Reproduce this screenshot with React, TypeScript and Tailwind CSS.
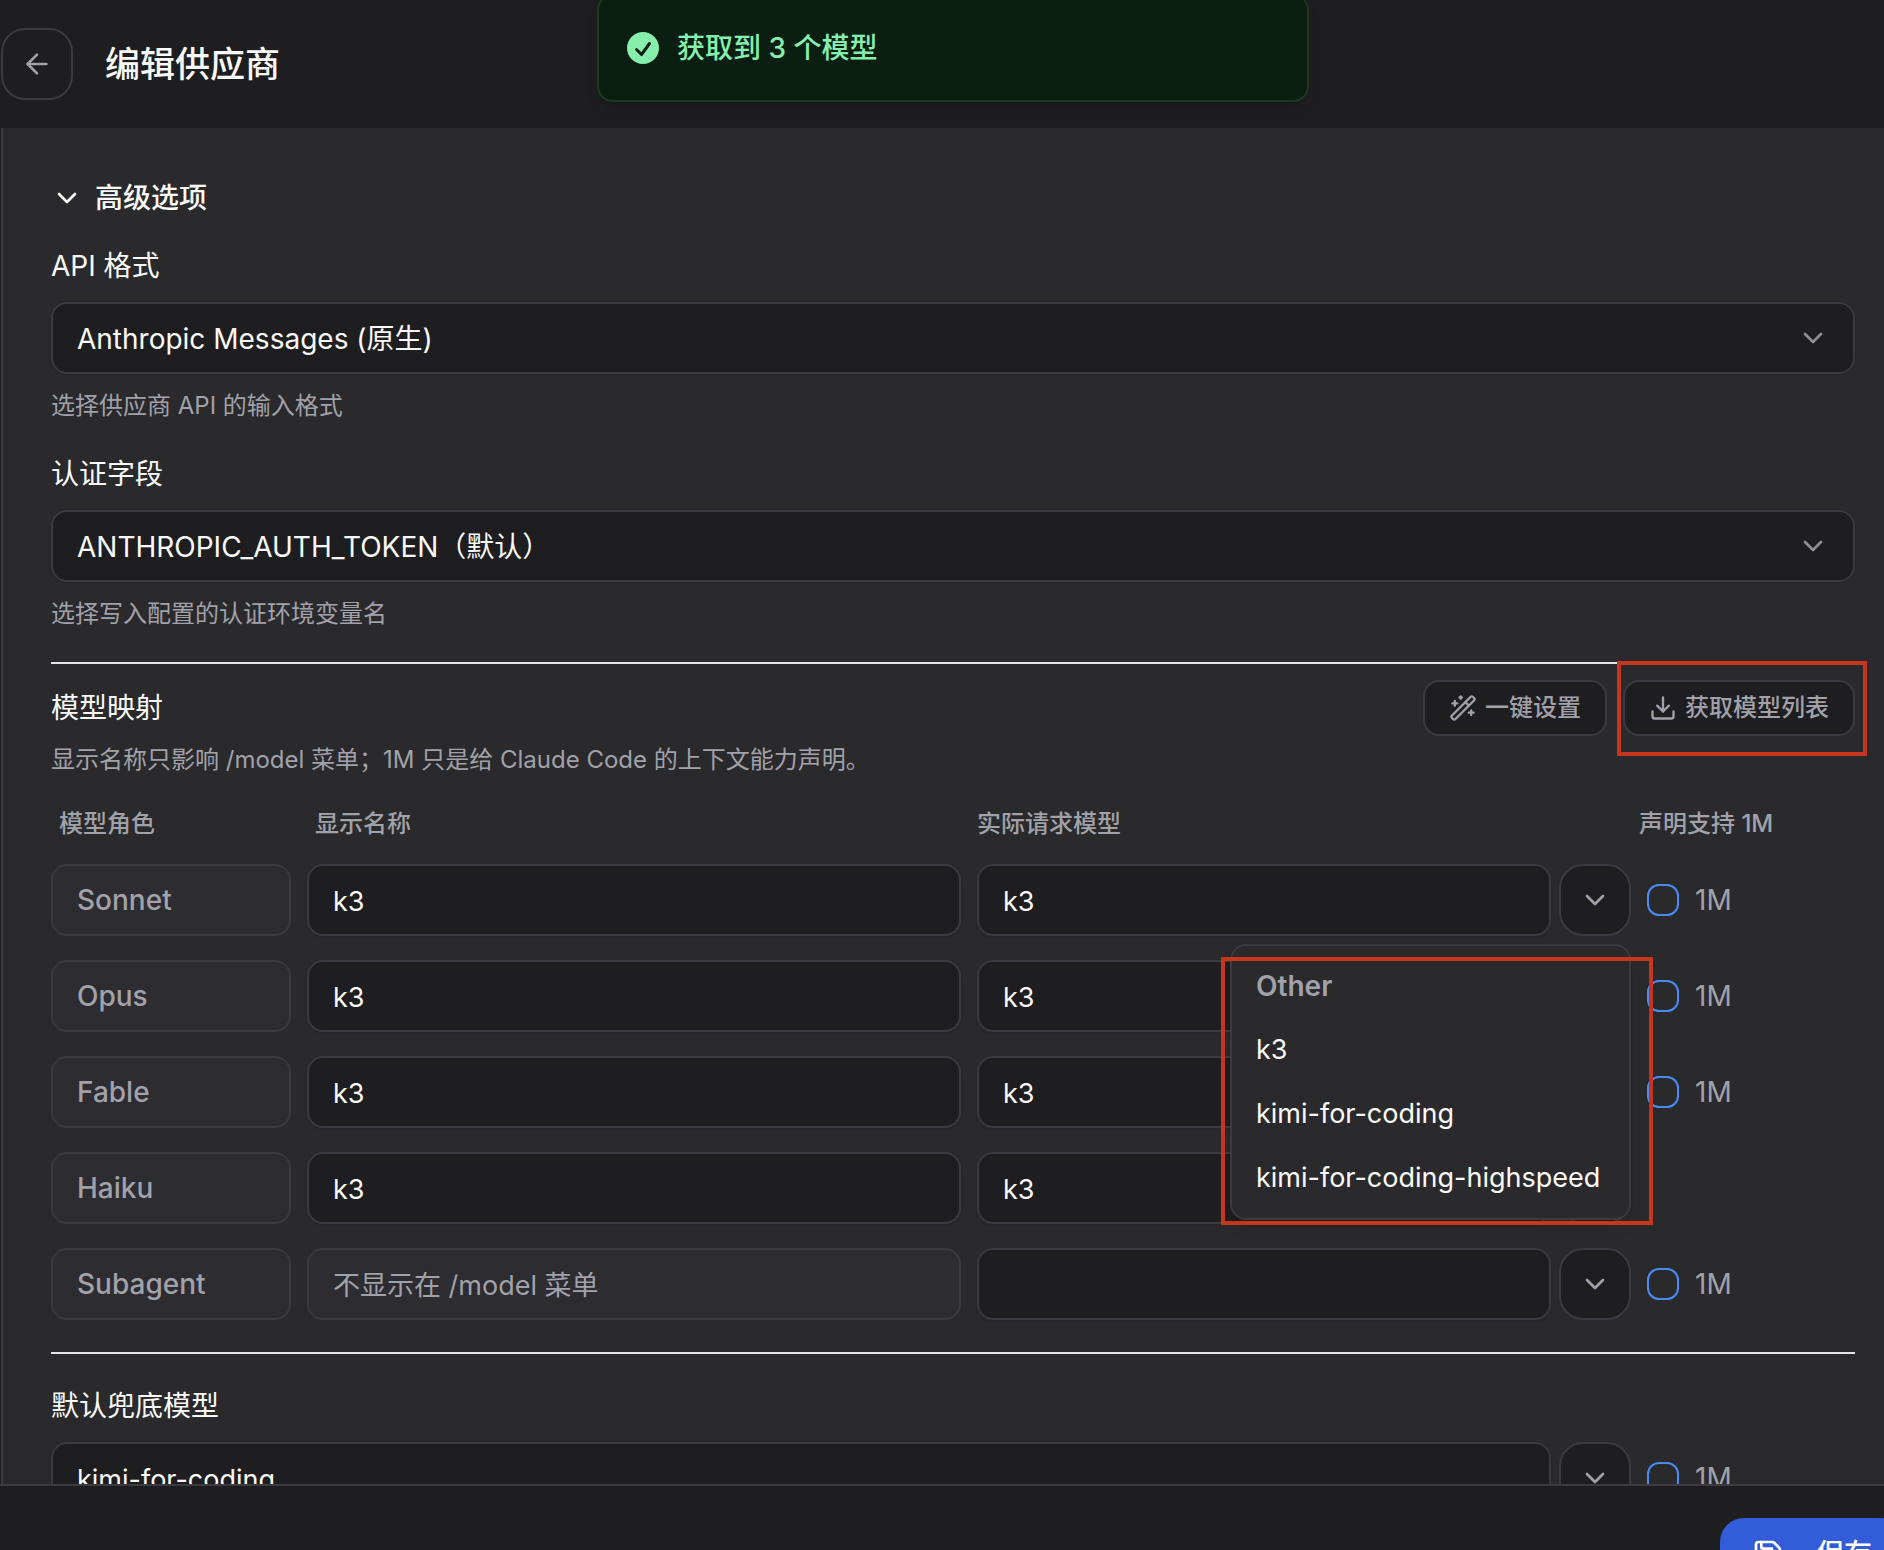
import React, { useState } from "react";
import { ArrowLeft, ChevronDown, Download, Save, WandSparkles } from "lucide-react";

type ModelRole = {
  id: string;
  role: string;
  display: string | null;
  model: string;
  canDeclare1M: boolean;
};

const ROLES: ModelRole[] = [
  { id: "sonnet", role: "Sonnet", display: "k3", model: "k3", canDeclare1M: true },
  { id: "opus", role: "Opus", display: "k3", model: "k3", canDeclare1M: true },
  { id: "fable", role: "Fable", display: "k3", model: "k3", canDeclare1M: true },
  { id: "haiku", role: "Haiku", display: "k3", model: "k3", canDeclare1M: false },
  { id: "subagent", role: "Subagent", display: null, model: "", canDeclare1M: true },
];

const FETCHED_MODELS = ["k3", "kimi-for-coding", "kimi-for-coding-highspeed"];

const fieldClass = "h-18 w-full min-w-0 rounded-2xl border-2 border-[#3a3a40] px-6 pt-0.5 outline-none";
const inputClass = `${fieldClass} bg-[#1e1e20] text-[27px] text-[#fafafa] shadow-sm`;

function SelectField({ id, label, hint, options }: { id: string; label: string; hint: string; options: string[] }) {
  return (
    <div className="flex flex-col gap-4">
      <label htmlFor={id} className="text-[28px] leading-10">{label}</label>
      <div className="relative">
        <select id={id} className={`${fieldClass} block appearance-none bg-[#1e1e20] text-[28px] text-[#fafafa] shadow-sm`}>
          {options.map((o) => (
            <option key={o}>{o}</option>
          ))}
        </select>
        <ChevronDown className="pointer-events-none absolute right-[26px] top-5 size-8 text-[#8f8f92]" />
      </div>
      <p className="text-2xl text-[#a1a1aa]">{hint}</p>
    </div>
  );
}

function ModelMenu({ onPick }: { onPick: (model: string) => void }) {
  return (
    <div className="absolute right-0 top-20 z-10 min-w-[401px]">
      <div role="menu" className="rounded-2xl border-2 border-[#3a3a40] bg-[#2a2a2c] p-2 shadow-lg">
        <div className="flex h-16 items-center px-4 text-[28px] font-semibold text-[#a1a1aa]">Other</div>
        {FETCHED_MODELS.map((m) => (
          <button
            key={m}
            type="button"
            role="menuitem"
            onClick={() => onPick(m)}
            className="flex h-16 w-full items-center whitespace-nowrap px-4 text-[27px] text-[#fafafa]"
          >
            {m}
          </button>
        ))}
      </div>
      <div className="pointer-events-none absolute -bottom-[5px] -left-[9px] -right-[22px] top-[13px] border-4 border-[#c6361f]" />
    </div>
  );
}

function ModelPicker({ id, label, initial, defaultOpen = false }: { id: string; label: string; initial: string; defaultOpen?: boolean }) {
  const [value, setValue] = useState(initial);
  const [open, setOpen] = useState(defaultOpen);

  return (
    <div className="relative flex min-w-0 flex-1 gap-2">
      <input id={id} aria-label={label} value={value} onChange={(e) => setValue(e.target.value)} className={inputClass} />
      <button
        type="button"
        aria-label="选择模型"
        onClick={() => setOpen(!open)}
        className="flex size-18 shrink-0 items-center justify-center rounded-3xl border-2 border-[#3a3a40] bg-[#1e1e20] text-[#a1a1aa]"
      >
        <ChevronDown className="size-8" />
      </button>
      {open && (
        <ModelMenu
          onPick={(m) => {
            setValue(m);
            setOpen(false);
          }}
        />
      )}
    </div>
  );
}

function Declare1M() {
  return (
    <label className="flex h-18 items-center gap-4 text-[28px] text-[#a1a1aa]">
      <input
        type="checkbox"
        className="size-8 appearance-none rounded-xl border-2 border-[#4a8af4] checked:bg-[#4a8af4]"
      />
      1M
    </label>
  );
}

export default function App() {
  const [expanded, setExpanded] = useState(true);

  return (
    <div className="flex h-screen flex-col overflow-hidden bg-[#1e1e20] font-[Inter,'Noto_Sans_CJK_SC',sans-serif] text-[#fafafa]">
      {/* Toast */}
      <div
        role="status"
        className="absolute -top-1.5 left-1/2 z-20 ml-[11px] flex h-[108px] w-[712px] -translate-x-1/2 items-center gap-3.5 rounded-2xl border-2 border-[#1b3a20] bg-[#0a1e12] px-6 text-[28px] font-medium text-[#86efac] shadow-lg"
      >
        <svg viewBox="0 0 20 20" fill="currentColor" className="size-10">
          <path
            fillRule="evenodd"
            clipRule="evenodd"
            d="M10 18a8 8 0 100-16 8 8 0 000 16zm3.857-9.809a.75.75 0 00-1.214-.882l-3.483 4.79-1.88-1.88a.75.75 0 10-1.06 1.061l2.5 2.5a.75.75 0 001.137-.089l4-5.5z"
          />
        </svg>
        获取到 3 个模型
      </div>

      {/* Header */}
      <header className="flex h-32 shrink-0 items-center gap-8 pl-px">
        <button
          type="button"
          aria-label="返回"
          className="flex size-18 items-center justify-center rounded-3xl border-2 border-[#3a3a40] text-[#a1a1aa]"
        >
          <ArrowLeft className="size-8" />
        </button>
        <h1 className="text-[35px] font-medium">编辑供应商</h1>
      </header>

      {/* Form */}
      <main className="ml-px min-h-0 flex-1 overflow-hidden border-l-2 border-[#3e3e42] bg-[#2a2a2c] pl-12 pr-[29px] pt-[50px]">
        <button
          type="button"
          onClick={() => setExpanded(!expanded)}
          className="mb-7 flex h-10 items-center gap-3 text-[28px] font-medium"
        >
          <ChevronDown className="size-8" />
          高级选项
        </button>

        {expanded && (
          <>
            <div className="flex flex-col gap-8">
              <SelectField
                id="api-format"
                label="API 格式"
                hint="选择供应商 API 的输入格式"
                options={["Anthropic Messages (原生)"]}
              />
              <SelectField
                id="auth-field"
                label="认证字段"
                hint="选择写入配置的认证环境变量名"
                options={["ANTHROPIC_AUTH_TOKEN（默认）"]}
              />
            </div>

            {/* Model mapping */}
            <section className="mt-8 border-t-2 border-[#e5e5e5] pt-4">
              <div className="flex items-center gap-4">
                <h2 className="flex-1 text-[28px]">模型映射</h2>
                <button
                  type="button"
                  className="flex h-14 items-center gap-2 rounded-2xl border-2 border-[#3a3a40] bg-[#1e1e20] px-6 text-2xl font-medium text-[#a1a1aa]"
                >
                  <WandSparkles className="size-7" />
                  一键设置
                </button>
                <div className="relative">
                  <button
                    type="button"
                    className="flex h-14 items-center gap-2 rounded-2xl border-2 border-[#3a3a40] bg-[#1e1e20] px-6 text-2xl font-medium text-[#a1a1aa]"
                  >
                    <Download className="size-7" />
                    获取模型列表
                  </button>
                  <div className="pointer-events-none absolute -bottom-5 -left-1.5 -right-3 -top-[19px] border-4 border-[#c6361f]" />
                </div>
              </div>
              <p className="mt-2 text-2xl text-[#a1a1aa]">
                显示名称只影响 /model 菜单；1M 只是给 Claude Code 的上下文能力声明。
              </p>

              <table className="mt-8 block">
                <thead className="block">
                  <tr className="grid grid-cols-[240px_1fr_1fr_208px] gap-4 text-left text-2xl text-[#a1a1aa]">
                    <th className="px-2 font-medium">模型角色</th>
                    <th className="px-2 font-medium">显示名称</th>
                    <th className="font-medium">实际请求模型</th>
                    <th className="-ml-2 font-medium">声明支持 1M</th>
                  </tr>
                </thead>
                <tbody className="mt-6 flex flex-col gap-6">
                  {ROLES.map((r) => (
                    <tr key={r.id} className="grid grid-cols-[240px_1fr_1fr_208px] gap-4">
                      <td className="flex h-18 items-center rounded-2xl border-2 border-[#3a3a40] bg-[#2d2c31] px-6 text-[28px] font-medium text-[#a1a1aa]">
                        {r.role}
                      </td>
                      <td className="min-w-0">
                        {r.display === null ? (
                          <input
                            disabled
                            aria-label={`${r.role} 显示名称`}
                            placeholder="不显示在 /model 菜单"
                            className={`${fieldClass} bg-[#2d2c31] text-[27px] placeholder:text-[#a1a1aa]`}
                          />
                        ) : (
                          <input defaultValue={r.display} aria-label={`${r.role} 显示名称`} className={inputClass} />
                        )}
                      </td>
                      <td className="flex min-w-0">
                        <ModelPicker
                          id={`${r.id}-model`}
                          label={`${r.role} 实际请求模型`}
                          initial={r.model}
                          defaultOpen={r.id === "sonnet"}
                        />
                      </td>
                      <td>{r.canDeclare1M && <Declare1M />}</td>
                    </tr>
                  ))}
                </tbody>
              </table>
            </section>

            {/* Fallback model */}
            <section className="mt-8 border-t-2 border-[#e5e5e5] pt-8">
              <label htmlFor="fallback-model" className="block text-[28px] leading-10">默认兜底模型</label>
              <div className="mt-4 grid grid-cols-[1fr_208px] gap-4">
                <ModelPicker id="fallback-model" label="默认兜底模型" initial="kimi-for-coding" />
                <Declare1M />
              </div>
            </section>
          </>
        )}
      </main>

      {/* Footer */}
      <footer className="flex h-[66px] shrink-0 items-start justify-end overflow-hidden border-t-2 border-[#3a3a40] pt-8">
        <button
          type="button"
          className="-mr-5 flex h-18 shrink-0 items-center gap-8 rounded-3xl bg-[#335cd9] px-8 text-[28px] font-medium text-white"
        >
          <Save className="size-8" />
          保存
        </button>
      </footer>
    </div>
  );
}
